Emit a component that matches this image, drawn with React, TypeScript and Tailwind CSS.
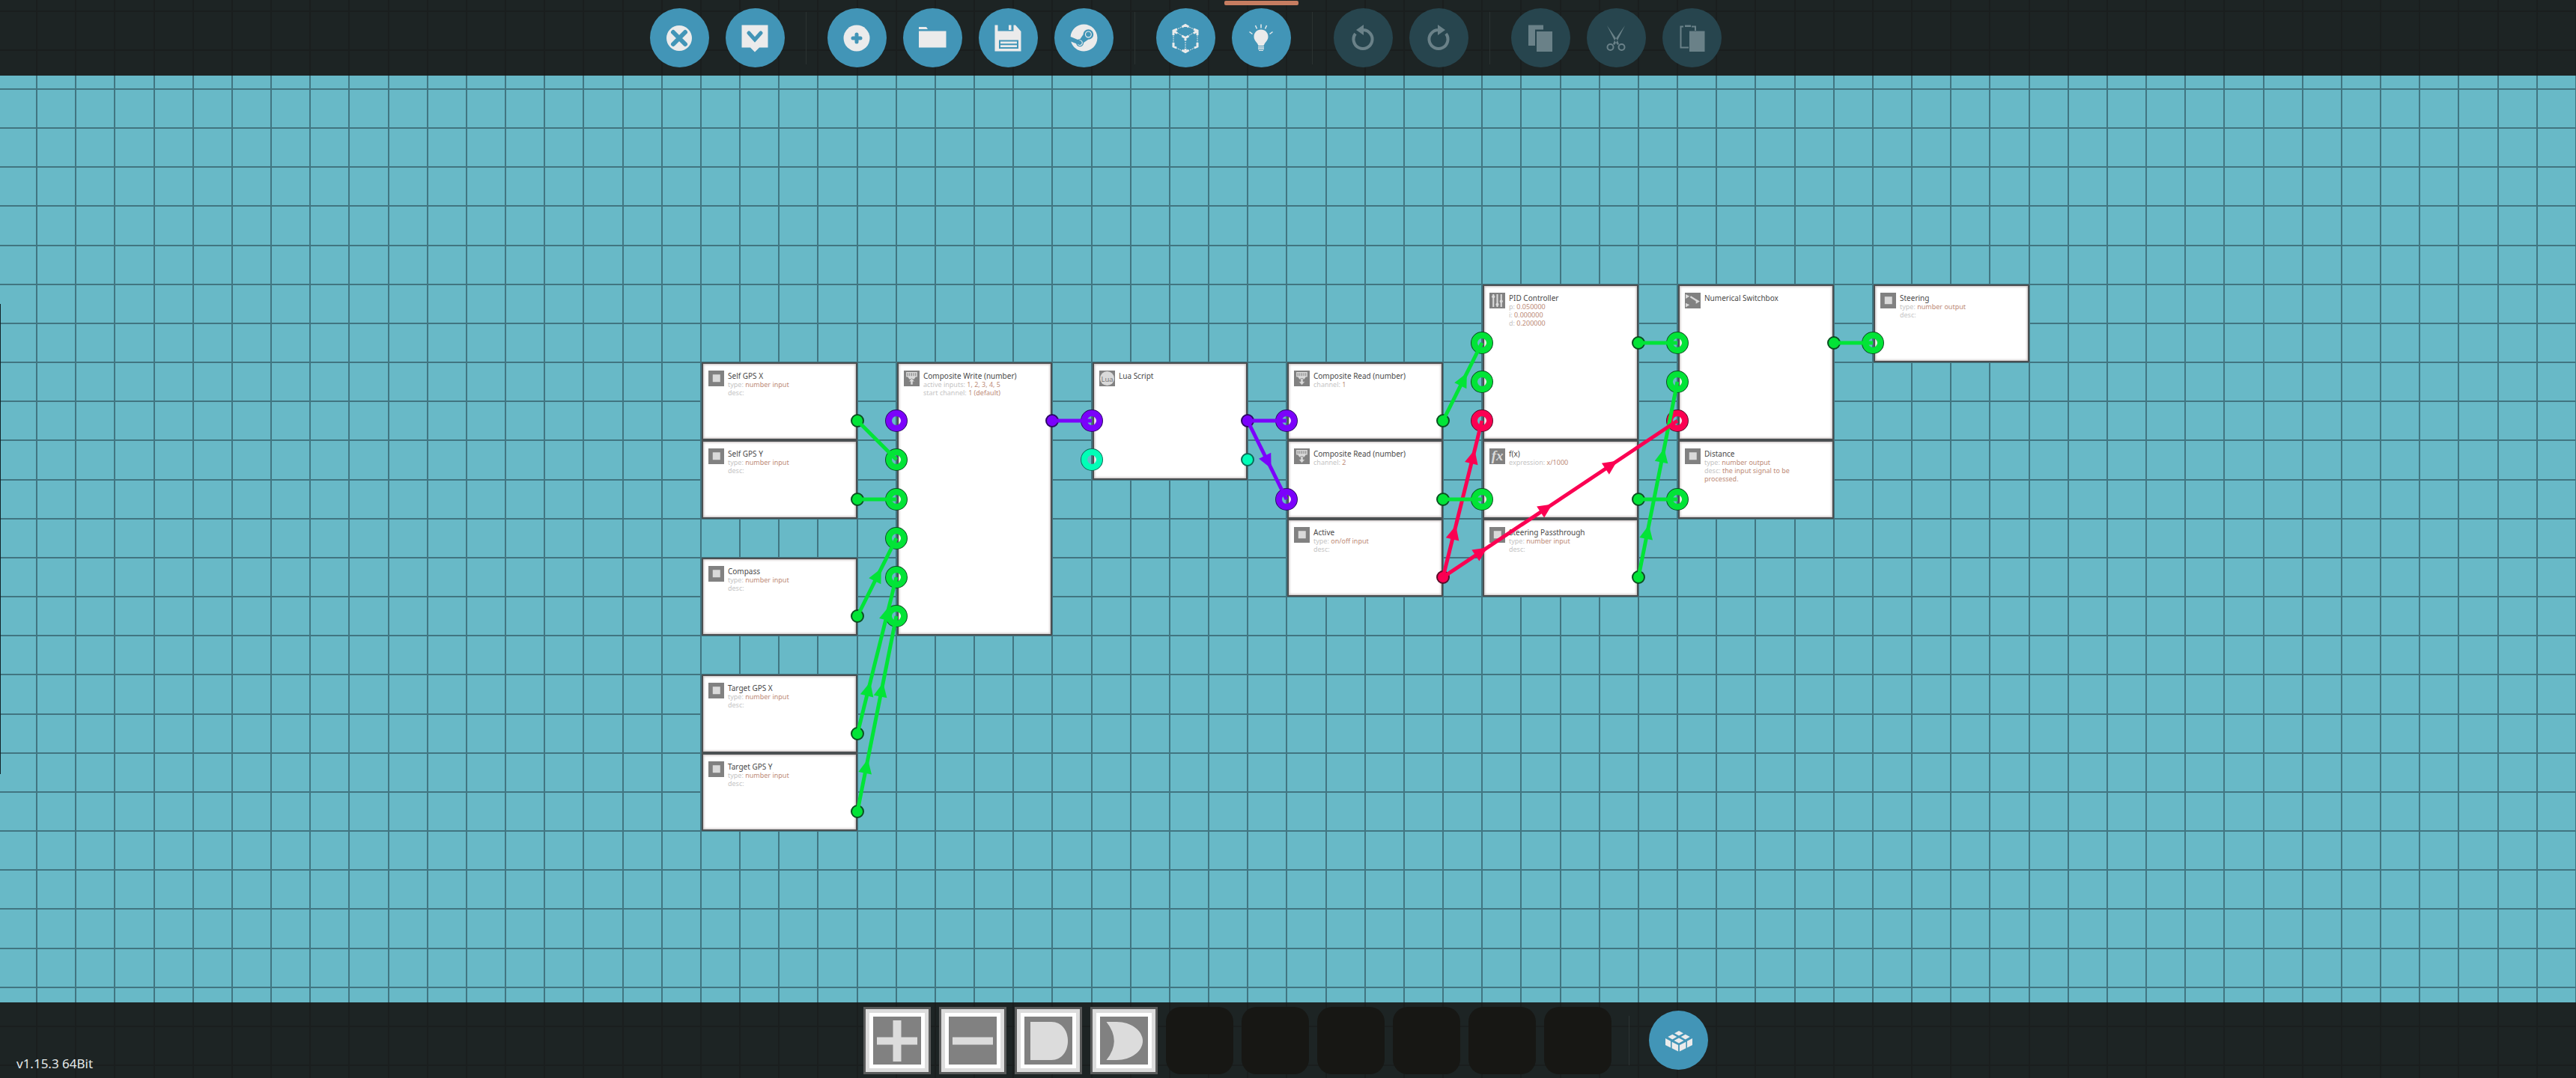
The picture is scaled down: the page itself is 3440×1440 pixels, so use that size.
import type { ReactNode } from "react";
import { FaSteam } from "react-icons/fa";

type Signal = "number" | "bool" | "composite" | "video";
type IconName = "io" | "write" | "read" | "lua" | "pid" | "fx" | "switch";

interface Port {
  row: number;
  signal: Signal;
}

interface GateNode {
  title: string;
  icon: IconName;
  col: number;
  row: number;
  height: number;
  details?: [string, string][];
  inputs?: Port[];
  outputs?: Port[];
}

interface Wire {
  signal: Signal;
  from: [number, number];
  to: [number, number];
}

const SIGNALS: Record<Signal, { fill: string; edge: string }> = {
  number: { fill: "#02e437", edge: "#0b4f22" },
  bool: { fill: "#fb0052", edge: "#5c0c2a" },
  composite: { fill: "#7b02fb", edge: "#2c0a66" },
  video: { fill: "#00ffb7", edge: "#0c6a58" },
};

// Grid units to canvas pixels
const CELL = 313 / 6;
const colX = (col: number) => Math.round(49 + col * CELL);
const rowY = (row: number) => Math.floor(15 + row * CELL);

const NODE_COLS = 4;

const NODES: GateNode[] = [
  {
    title: "Self GPS X", icon: "io", col: 17, row: 9, height: 2,
    details: [["type:", "number input"], ["desc:", ""]],
    outputs: [{ row: 10.5, signal: "number" }],
  },
  {
    title: "Self GPS Y", icon: "io", col: 17, row: 11, height: 2,
    details: [["type:", "number input"], ["desc:", ""]],
    outputs: [{ row: 12.5, signal: "number" }],
  },
  {
    title: "Compass", icon: "io", col: 17, row: 14, height: 2,
    details: [["type:", "number input"], ["desc:", ""]],
    outputs: [{ row: 15.5, signal: "number" }],
  },
  {
    title: "Target GPS X", icon: "io", col: 17, row: 17, height: 2,
    details: [["type:", "number input"], ["desc:", ""]],
    outputs: [{ row: 18.5, signal: "number" }],
  },
  {
    title: "Target GPS Y", icon: "io", col: 17, row: 19, height: 2,
    details: [["type:", "number input"], ["desc:", ""]],
    outputs: [{ row: 20.5, signal: "number" }],
  },
  {
    title: "Composite Write (number)", icon: "write", col: 22, row: 9, height: 7,
    details: [["active inputs:", "1, 2, 3, 4, 5"], ["start channel:", "1 (default)"]],
    inputs: [
      { row: 10.5, signal: "composite" },
      { row: 11.5, signal: "number" },
      { row: 12.5, signal: "number" },
      { row: 13.5, signal: "number" },
      { row: 14.5, signal: "number" },
      { row: 15.5, signal: "number" },
    ],
    outputs: [{ row: 10.5, signal: "composite" }],
  },
  {
    title: "Lua Script", icon: "lua", col: 27, row: 9, height: 3,
    inputs: [{ row: 10.5, signal: "composite" }, { row: 11.5, signal: "video" }],
    outputs: [{ row: 10.5, signal: "composite" }, { row: 11.5, signal: "video" }],
  },
  {
    title: "Composite Read (number)", icon: "read", col: 32, row: 9, height: 2,
    details: [["channel:", "1"]],
    inputs: [{ row: 10.5, signal: "composite" }],
    outputs: [{ row: 10.5, signal: "number" }],
  },
  {
    title: "Composite Read (number)", icon: "read", col: 32, row: 11, height: 2,
    details: [["channel:", "2"]],
    inputs: [{ row: 12.5, signal: "composite" }],
    outputs: [{ row: 12.5, signal: "number" }],
  },
  {
    title: "Active", icon: "io", col: 32, row: 13, height: 2,
    details: [["type:", "on/off input"], ["desc:", ""]],
    outputs: [{ row: 14.5, signal: "bool" }],
  },
  {
    title: "PID Controller", icon: "pid", col: 37, row: 7, height: 4,
    details: [["p:", "0.050000"], ["i:", "0.000000"], ["d:", "0.200000"]],
    inputs: [
      { row: 8.5, signal: "number" },
      { row: 9.5, signal: "number" },
      { row: 10.5, signal: "bool" },
    ],
    outputs: [{ row: 8.5, signal: "number" }],
  },
  {
    title: "f(x)", icon: "fx", col: 37, row: 11, height: 2,
    details: [["expression:", "x/1000"]],
    inputs: [{ row: 12.5, signal: "number" }],
    outputs: [{ row: 12.5, signal: "number" }],
  },
  {
    title: "Steering Passthrough", icon: "io", col: 37, row: 13, height: 2,
    details: [["type:", "number input"], ["desc:", ""]],
    outputs: [{ row: 14.5, signal: "number" }],
  },
  {
    title: "Numerical Switchbox", icon: "switch", col: 42, row: 7, height: 4,
    inputs: [
      { row: 8.5, signal: "number" },
      { row: 9.5, signal: "number" },
      { row: 10.5, signal: "bool" },
    ],
    outputs: [{ row: 8.5, signal: "number" }],
  },
  {
    title: "Distance", icon: "io", col: 42, row: 11, height: 2,
    details: [["type:", "number output"], ["desc:", "the input signal to be processed."]],
    inputs: [{ row: 12.5, signal: "number" }],
  },
  {
    title: "Steering", icon: "io", col: 47, row: 7, height: 2,
    details: [["type:", "number output"], ["desc:", ""]],
    inputs: [{ row: 8.5, signal: "number" }],
  },
];

const WIRES: Wire[] = [
  { signal: "number", from: [21, 10.5], to: [22, 11.5] },
  { signal: "number", from: [21, 12.5], to: [22, 12.5] },
  { signal: "number", from: [21, 15.5], to: [22, 13.5] },
  { signal: "number", from: [21, 18.5], to: [22, 14.5] },
  { signal: "number", from: [21, 20.5], to: [22, 15.5] },
  { signal: "composite", from: [26, 10.5], to: [27, 10.5] },
  { signal: "composite", from: [31, 10.5], to: [32, 10.5] },
  { signal: "composite", from: [31, 10.5], to: [32, 12.5] },
  { signal: "bool", from: [36, 14.5], to: [37, 10.5] },
  { signal: "number", from: [36, 10.5], to: [37, 8.5] },
  { signal: "number", from: [36, 12.5], to: [37, 12.5] },
  { signal: "number", from: [41, 8.5], to: [42, 8.5] },
  { signal: "number", from: [41, 12.5], to: [42, 12.5] },
  { signal: "number", from: [41, 14.5], to: [42, 9.5] },
  { signal: "number", from: [46, 8.5], to: [47, 8.5] },
  { signal: "bool", from: [36, 14.5], to: [42, 10.5] },
];

function Grid() {
  return (
    <svg className="absolute inset-0 h-full w-full" fill="#417581" aria-hidden="true">
      {Array.from({ length: 100 }, (_, i) => (
        <rect key={`c${i}`} x={colX(i) - 1} y="0" width="2" height="100%" />
      ))}
      {Array.from({ length: 50 }, (_, i) => (
        <rect key={`r${i}`} x="0" y={rowY(i) - 1} width="100%" height="2" />
      ))}
    </svg>
  );
}

function NodeIcon({ name }: { name: IconName }) {
  return (
    <svg viewBox="0 0 20 20" className="size-[21px] shrink-0 bg-[#818181]" fill="#dadada" aria-hidden="true">
      {name === "io" && <rect x="5.500" y="5" width="9.500" height="9.500" />}
      {(name === "write" || name === "read") && (
        <>
          <path d="M3 2h14v6h-2l-2 3H7L5 8H3z" />
          <path d="M5 3v4M7.500 3v4M10 3v4M12.500 3v4M15 3v4" stroke="#818181" strokeWidth="1" />
        </>
      )}
      {name === "write" && <path d="M10 10l4 4h-2.500v4h-3v-4H6z" stroke="#818181" strokeWidth=".6" />}
      {name === "read" && <path d="M8.500 10h3v4H14l-4 4.500L6 14h2.500z" stroke="#818181" strokeWidth=".6" />}
      {name === "lua" && (
        <>
          <circle cx="10" cy="10" r="9" />
          <text x="10" y="14" textAnchor="middle" fontSize="9" fill="#777">Lua</text>
        </>
      )}
      {name === "pid" && (
        <>
          <path d="M4 2h2v16H4zM9 2h2v16H9zM14 2h2v16h-2z" />
          <circle cx="5" cy="5" r="2" />
          <circle cx="10" cy="15" r="2" />
          <circle cx="15" cy="11" r="2" />
        </>
      )}
      {name === "fx" && (
        <text x="10" y="15" textAnchor="middle" className="font-['Liberation_Serif',serif] font-bold italic" fontSize="18">
          fx
        </text>
      )}
      {name === "switch" && (
        <>
          <path d="M1 2l5 2.500-5 3zM1 13l5 2.500-5 3zM19 11l-5 3V8z" />
          <path d="M7 5l8 5" stroke="#dadada" strokeWidth="2" />
        </>
      )}
    </svg>
  );
}

function NodeCard({ node }: { node: GateNode }) {
  const left = colX(node.col) + 1;
  const top = rowY(node.row);
  return (
    <article
      className="absolute flex gap-[5px] border-2 border-[#4b5052] bg-white px-[7px] py-[9px] shadow-[inset_0_0_3px_1px_#c4bcbc]"
      style={{
        left,
        top,
        width: colX(node.col + NODE_COLS) - left,
        height: rowY(node.row + node.height) - top,
      }}
    >
      <NodeIcon name={node.icon} />
      <div className="w-[130px] text-[9px] leading-[11px] text-[#c4c4c4]">
        <h2 className="mt-px text-[10px] leading-[12px] whitespace-nowrap text-[#484848]">{node.title}</h2>
        {node.details?.map(([label, value]) => (
          <p key={label}>
            {label} <span className="text-[#bd8b77]">{value}</span>
          </p>
        ))}
      </div>
    </article>
  );
}

function WireLine({ wire }: { wire: Wire }) {
  const [x1, y1] = [colX(wire.from[0]), rowY(wire.from[1])];
  const [x2, y2] = [colX(wire.to[0]), rowY(wire.to[1])];
  const length = Math.hypot(x2 - x1, y2 - y1);
  const angle = (Math.atan2(y2 - y1, x2 - x1) * 180) / Math.PI;
  // one arrow head for each two cells of length
  const arrows = Math.floor(length / (2 * CELL));
  return (
    <g fill={SIGNALS[wire.signal].fill} transform={`translate(${x1} ${y1}) rotate(${angle})`}>
      <rect x="0" y="-2.500" width={length} height="5" />
      {Array.from({ length: arrows }, (_, i) => (
        <path key={i} d="M0 -9L19 0L0 9z" transform={`translate(${(2 * i + 1) * CELL} 0)`} />
      ))}
    </g>
  );
}

function Ports({ node }: { node: GateNode }) {
  return (
    <>
      {node.inputs?.map(({ row, signal }) => (
        <g key={`in${row}`} fill="none">
          <circle cx={colX(node.col)} cy={rowY(row)} r="14" stroke={SIGNALS[signal].edge} strokeWidth="2" />
          <circle cx={colX(node.col)} cy={rowY(row)} r="10" stroke={SIGNALS[signal].fill} strokeWidth="8" />
        </g>
      ))}
      {node.outputs?.map(({ row, signal }) => (
        <circle
          key={`out${row}`}
          cx={colX(node.col + NODE_COLS)}
          cy={rowY(row)}
          r="8"
          fill={SIGNALS[signal].fill}
          stroke={SIGNALS[signal].edge}
          strokeWidth="2"
        />
      ))}
    </>
  );
}

function Canvas() {
  return (
    <main className="relative col-start-1 row-span-full overflow-hidden bg-[#68b9c7]">
      <Grid />
      {NODES.map((node) => (
        <NodeCard key={`${node.col}-${node.row}`} node={node} />
      ))}
      <svg className="absolute inset-0 h-full w-full" aria-hidden="true">
        {NODES.map((node) => (
          <Ports key={`${node.col}-${node.row}`} node={node} />
        ))}
        {WIRES.map((wire, i) => (
          <WireLine key={i} wire={wire} />
        ))}
      </svg>
    </main>
  );
}

function ToolButton({ label, disabled, active, children }: { label: string; disabled?: boolean; active?: boolean; children: ReactNode }) {
  return (
    <button
      type="button"
      aria-label={label}
      disabled={disabled}
      className="relative flex size-[79px] items-center justify-center rounded-full bg-[#4295b7] text-[#ebebeb] disabled:bg-[#27454e] disabled:text-[#6a8188]"
    >
      {active && <span className="absolute inset-x-[-10px] top-[-10px] h-1.5 rounded-xs bg-[#c67d61]" />}
      {children}
    </button>
  );
}

function Glyph({ children }: { children: ReactNode }) {
  return (
    <svg viewBox="0 0 40 40" className="size-10" fill="currentColor" aria-hidden="true">
      {children}
    </svg>
  );
}

function Separator() {
  return <div className="mx-7 h-[70px] w-px bg-[#2b3231]" />;
}

function TopBar() {
  return (
    <header className="z-10 col-start-1 row-start-1 flex items-center justify-center bg-[#171716]/92 pr-[274px]">
      <div className="flex gap-[22px]">
        <ToolButton label="Close">
          <Glyph>
            <circle cx="20" cy="20" r="17" />
            <path d="M12 12l16 16M28 12L12 28" stroke="#4295b7" strokeWidth="6" strokeLinecap="round" />
          </Glyph>
        </ToolButton>
        <ToolButton label="Tutorial">
          <Glyph>
            <path d="M2.500 2.500h35v30H26l-6 6-6-6H2.500z" />
            <path d="M12 13l8 9 8-9" fill="none" stroke="#4295b7" strokeWidth="5" strokeLinecap="round" />
          </Glyph>
        </ToolButton>
      </div>
      <Separator />
      <div className="flex gap-[22px]">
        <ToolButton label="New">
          <Glyph>
            <circle cx="20" cy="20" r="17.500" />
            <path d="M20 15v10M15 20h10" stroke="#4295b7" strokeWidth="5" strokeLinecap="round" />
          </Glyph>
        </ToolButton>
        <ToolButton label="Open">
          <Glyph>
            <path d="M2 5h10l2 3H2zM2 10.500h36.500v22H2z" />
          </Glyph>
        </ToolButton>
        <ToolButton label="Save">
          <Glyph>
            <path d="M2.500 2.500h27.500l7.500 8.500v26.500h-35z" />
            <path d="M6.500 2h21v8.500h-21z" fill="#4295b7" />
            <path d="M21 2.500h3.500V9H21z" />
            <path d="M9 23.500h24v9.500H9zM8 28.200h26" fill="none" stroke="#4295b7" strokeWidth="2" />
          </Glyph>
        </ToolButton>
        <ToolButton label="Workshop">
          <FaSteam className="size-[37px]" />
        </ToolButton>
      </div>
      <Separator />
      <div className="flex gap-[22px]">
        <ToolButton label="Resize">
          <Glyph>
            <path
              d="M20 3L4 10v21l16 8 16-8V10zM4 10l16 9 16-9M20 19v19"
              fill="none"
              stroke="currentColor"
              strokeWidth="1"
              strokeDasharray="2 1"
            />
            <path
              d="M15.500 5L20 2.500 24.500 5M4 16v-6l5-2M4 10l5 3.500M36 16v-6l-5-2M36 10l-5 3.500M15.500 17l4.500 2.500 4.500-2.500M20 19v4M4 26v5l4 2M36 26v5l-4 2M15.500 36l4.500 2.500 4.500-2.500M20 38v-4"
              fill="none"
              stroke="currentColor"
              strokeWidth="3"
            />
          </Glyph>
        </ToolButton>
        <ToolButton label="Toggle lights" active>
          <Glyph>
            <path d="M20 8.500c5.500 0 9.500 4.200 9.500 9.500 0 4-2.500 6-4.500 9l-1.500 3h-7l-1.500-3c-2-3-4.500-5-4.500-9 0-5.300 4-9.500 9.500-9.500zM16 31h8v1.500h-8zM16 33.500h8V35h-8zM17 36h6v1h-6z" />
            <path
              d="M20 1.500v5M12.500 3l2 4.500M27.500 3l-2 4.500M4.500 11.500l4 3M35.500 11.500l-4 3"
              stroke="currentColor"
              strokeWidth="1.500"
            />
          </Glyph>
        </ToolButton>
      </div>
      <Separator />
      <div className="flex gap-[22px]">
        <ToolButton label="Undo" disabled>
          <Glyph>
            <path d="M10 14a12.500 12.500 0 1 0 11-5" fill="none" stroke="currentColor" strokeWidth="4" />
            <path d="M21 2v14L11 9z" />
          </Glyph>
        </ToolButton>
        <ToolButton label="Redo" disabled>
          <Glyph>
            <path d="M30 14a12.500 12.500 0 1 1-11-5" fill="none" stroke="currentColor" strokeWidth="4" />
            <path d="M19 2v14l10-7z" />
          </Glyph>
        </ToolButton>
      </div>
      <Separator />
      <div className="flex gap-[22px]">
        <ToolButton label="Copy" disabled>
          <Glyph>
            <path d="M4 2.500h20v6H13v21.500H4zM15 11h21v27H15z" />
          </Glyph>
        </ToolButton>
        <ToolButton label="Cut" disabled>
          <Glyph>
            <path d="M8 3l14 20 2 5-2 1-4-6zM32 3L18 23l-2 5 2 1 4-6z" />
            <circle cx="12.500" cy="32" r="4" fill="none" stroke="currentColor" strokeWidth="2" />
            <circle cx="27.500" cy="32" r="4" fill="none" stroke="currentColor" strokeWidth="2" />
          </Glyph>
        </ToolButton>
        <ToolButton label="Paste" disabled>
          <Glyph>
            <path d="M16 32.500H5.500v-28H9M20 4.500h5V10" fill="none" stroke="currentColor" strokeWidth="2" />
            <path d="M11 2.500h8V5h-8zM17 10.500h20.500V38H17z" />
          </Glyph>
        </ToolButton>
      </div>
    </header>
  );
}

const HOTBAR = [
  { label: "Add", shape: "M26.500 5h11v22.500H59v10H37.500V60h-11V37.500H5v-10h21.500z" },
  { label: "Subtract", shape: "M5 27.500h54v10H5z" },
  { label: "AND", shape: "M8 7h28c14 0 22 12 22 25.500S50 58 36 58H8z" },
  { label: "OR", shape: "M8.500 7H22c20 0 35 12 35 25.500S42 58 22 58H8.500Q29 32.500 8.500 7z" },
];

function BottomBar() {
  return (
    <footer className="z-10 col-start-1 row-start-3 grid grid-cols-[1fr_auto_1fr] bg-[#171716]/92">
      <p className="self-end pb-2 pl-[22px] text-[17px] leading-[22px] text-[#e4e8e8]">v1.15.3 64Bit</p>
      <div className="flex items-center pr-1.5">
        <div className="flex gap-[11px]">
          {HOTBAR.map(({ label, shape }) => (
            <button key={label} type="button" aria-label={label} className="size-[90px] border-[3px] border-[#5a5b5b] bg-[#dcdcdc] p-[5px]">
              {/* the white border takes 5px a side, which leaves a 64px drawing */}
              <svg viewBox="0 0 64 64" className="size-full border-[5px] border-white bg-[#818181]" fill="#dcdcdc" aria-hidden="true">
                <path d={shape} />
              </svg>
            </button>
          ))}
          {[5, 6, 7, 8, 9, 10].map((slot) => (
            <button key={slot} type="button" aria-label={`Empty slot ${slot}`} className="size-[90px] rounded-[20px] bg-[#171714]" />
          ))}
        </div>
        <div className="mr-[26px] ml-[23px] h-[66px] w-px bg-[#2d3433]" />
        <ToolButton label="Components">
          <Glyph>
            <path d="M20 7l6 3.300-6 3.300-6-3.300zM11.300 11.800l6 3.300-6 3.300-6-3.300zM28.700 11.800l6 3.300-6 3.300-6-3.300zM20 16.600l6.500 3.500-6.500 3.500-6.500-3.500z" />
            <path d="M2 17l7 3.700v8.800l-7-3.500zM38 17l-7 3.700v8.800l7-3.500zM10.600 21.800l8.500 4.200v8.500l-8.500-4.200zM29.400 21.800L20.900 26v8.500l8.500-4.200z" />
          </Glyph>
        </ToolButton>
      </div>
    </footer>
  );
}

export default function App() {
  return (
    <div className="grid h-screen grid-cols-[minmax(0,1fr)] grid-rows-[101px_minmax(0,1fr)_101px] font-['Noto_Sans','Open_Sans',sans-serif]">
      <Canvas />
      <div className="z-10 col-start-1 row-start-2 h-[628px] w-px self-center bg-[#122327]" />
      <TopBar />
      <BottomBar />
    </div>
  );
}
